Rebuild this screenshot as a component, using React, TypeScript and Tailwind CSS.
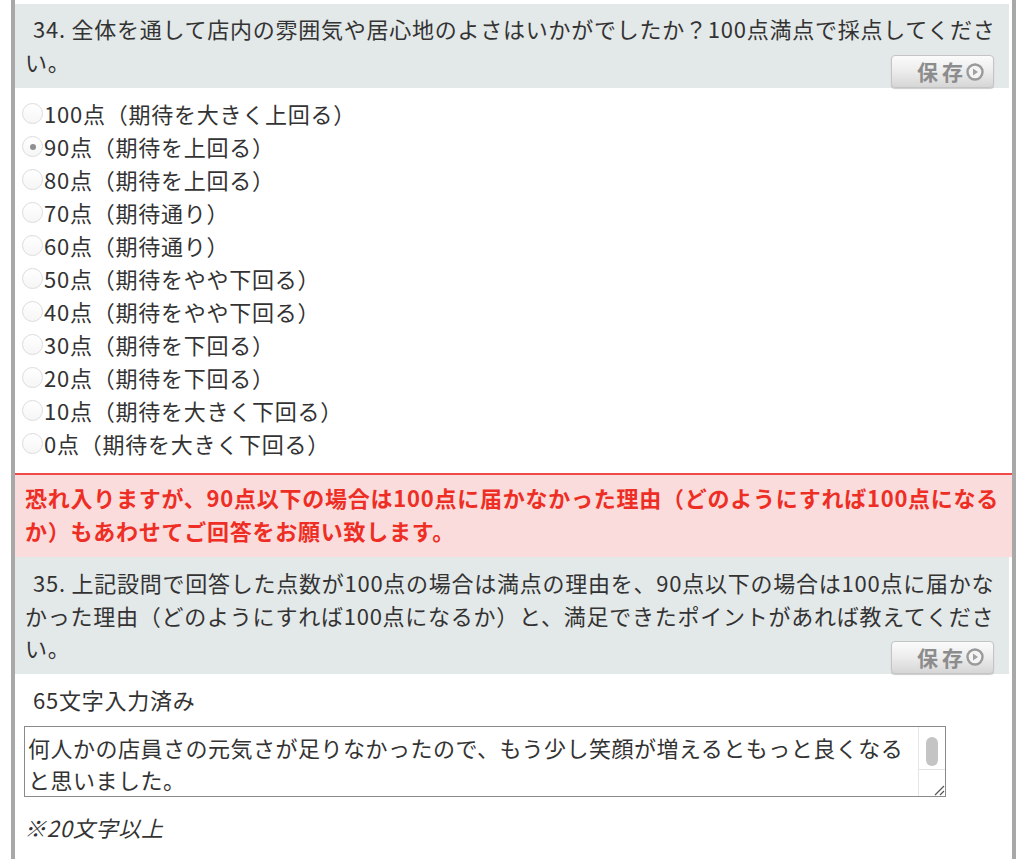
import React from 'react'

const font = { fontFamily: '"Noto Sans CJK JP", "Noto Sans", sans-serif' }

const options = [
  { label: '100点（期待を大きく上回る）' },
  { label: '90点（期待を上回る）', checked: true },
  { label: '80点（期待を上回る）' },
  { label: '70点（期待通り）' },
  { label: '60点（期待通り）' },
  { label: '50点（期待をやや下回る）' },
  { label: '40点（期待をやや下回る）' },
  { label: '30点（期待を下回る）' },
  { label: '20点（期待を下回る）' },
  { label: '10点（期待を大きく下回る）' },
  { label: '0点（期待を大きく下回る）' },
]

function SaveButton() {
  return (
    <button className="w-[103px] h-[33px] rounded-[4px] border border-[#c4c4c4] bg-gradient-to-b from-[#fbfbfb] via-[#ececec] to-[#d6d6d6] shadow-[0_1px_1px_rgba(0,0,0,0.2)] flex items-center justify-end pr-[9px] gap-[3px]">
      <span className="text-[21px] font-bold text-[#8c8c8c] leading-none tracking-normal flex gap-[4px]">
        <span>保</span>
        <span>存</span>
      </span>
      <svg width="18" height="18" viewBox="0 0 18 18">
        <circle cx="9" cy="9" r="7.5" fill="#f4f4f4" stroke="#9a9a9a" strokeWidth="2.4" />
        <path d="M7 5.6 L12 9 L7 12.4 Z" fill="#a0a0a0" />
      </svg>
    </button>
  )
}

function Radio({ checked }: { checked?: boolean }) {
  return (
    <span className="w-[21px] h-[21px] rounded-full border border-[#dcdcdc] bg-gradient-to-b from-white to-[#f6f6f6] flex items-center justify-center shrink-0">
      {checked && <span className="w-[6px] h-[6px] rounded-full bg-[#8f8f8f]" />}
    </span>
  )
}

export default function App() {
  return (
    <div className="min-h-screen bg-white text-[#333] text-[22px] leading-[33px] tracking-[0.75px]" style={font}>
      <div className="ml-[11px] w-[1005px] min-h-[859px] border-x-4 border-[#a8a8a8] pt-1">
        {/* 設問34 */}
        <div className="mr-[3px] bg-[#e3e8e8] pl-[10px] pr-[4px] pt-[8px]">
          <p className="whitespace-nowrap">
            <span className="pl-[8px]">34. </span>全体を通して店内の雰囲気や居心地のよさはいかがでしたか？100点満点で採点してくださ<br />い。
          </p>
          <div className="flex justify-end -mt-[23px] -mb-[2px] pr-[11px]">
            <SaveButton />
          </div>
        </div>

        <div className="pt-[11px] pb-[13px] pl-[7px]">
          {options.map((o, i) => (
            <label key={i} className="flex items-center h-[33px]">
              <Radio checked={o.checked} />
              <span className="ml-[1px]">{o.label}</span>
            </label>
          ))}
        </div>

        {/* 注意書き */}
        <div className="border-t-2 border-[#f04a48] bg-[#fadcdc] pl-[10px] pr-[2px] pt-[6px] pb-[10px] font-bold text-[#ee2e24] whitespace-nowrap">
          恐れ入りますが、90点以下の場合は100点に届かなかった理由（どのようにすれば100点になる<br />か）もあわせてご回答をお願い致します。
        </div>

        {/* 設問35 */}
        <div className="mr-[3px] bg-[#e3e8e8] pl-[10px] pr-[4px] pt-[9px]">
          <p className="whitespace-nowrap leading-[32.5px]">
            <span className="pl-[8px]">35. </span>上記設問で回答した点数が100点の場合は満点の理由を、90点以下の場合は100点に届かな<br />かった理由（どのようにすれば100点になるか）と、満足できたポイントがあれば教えてくださ<br />い。
          </p>
          <div className="flex justify-end -mt-[23px] -mb-[1px] pr-[11px]">
            <SaveButton />
          </div>
        </div>

        <div className="pl-[9px] pt-[10px]">
          <p className="pl-[9px]">65文字入力済み</p>
          <div className="mt-[10px] w-[922px] h-[71px] border-[1.5px] border-[#8a8a8a] flex">
            <div className="flex-1 pl-[3px] pt-[4px] leading-[32px] whitespace-nowrap tracking-[0.5px]">
              何人かの店員さの元気さが足りなかったので、もう少し笑顔が増えるともっと良くなる<br />と思いました。
            </div>
            <div className="w-[27px] border-l border-[#e6e6e6] flex flex-col">
              <div className="h-[43px] border-b border-[#e2e2e2] flex justify-center pt-[10px]">
                <span className="w-[12px] h-[29px] rounded-[6px] bg-[#c4c4c4]" />
              </div>
              <div className="flex-1 flex items-end justify-end">
                <svg width="14" height="14" viewBox="0 0 14 14">
                  <path d="M13 4 L4 13 M13 9 L9 13" stroke="#555" strokeWidth="1.2" />
                </svg>
              </div>
            </div>
          </div>
          <p className="mt-[14px] italic">※20文字以上</p>
        </div>
      </div>
    </div>
  )
}
